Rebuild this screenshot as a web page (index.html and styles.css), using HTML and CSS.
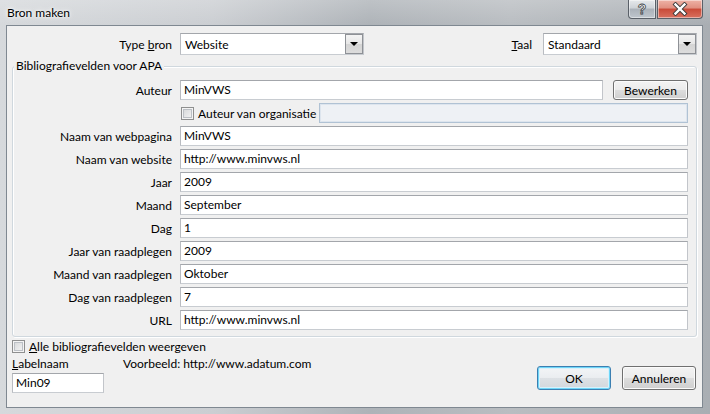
FILE: index.html
```html
<!DOCTYPE html>
<html lang="nl">
<head>
<meta charset="utf-8">
<title>Bron maken</title>
<link rel="stylesheet" href="styles.css">
</head>
<body>
<div class="window">
  <div class="titlebar">
    <span class="title">Bron maken</span>
    <div class="caption">
      <div class="cap-btn help"><span class="help-glyph">?</span></div>
      <div class="cap-btn close">
        <svg width="16" height="14" viewBox="0 0 16 14">
          <path d="M3.5 2.5 L12.5 11.5 M12.5 2.5 L3.5 11.5" stroke="#3a3a3a" stroke-width="4.2" stroke-linecap="square" fill="none"/>
          <path d="M3.5 2.5 L12.5 11.5 M12.5 2.5 L3.5 11.5" stroke="#ffffff" stroke-width="2.4" stroke-linecap="square" fill="none"/>
        </svg>
      </div>
    </div>
  </div>
  <div class="client">
    <div class="top-row">
      <span class="lbl type-lbl">Type <u>b</u>ron</span>
      <div class="select type-select"><span class="value">Website</span><span class="drop"><span class="tri"></span></span></div>
      <span class="lbl taal-lbl"><u>T</u>aal</span>
      <div class="select taal-select"><span class="value">Standaard</span><span class="drop"><span class="tri"></span></span></div>
    </div>
    <div class="group">
      <span class="legend">Bibliografievelden voor APA</span>
      <div class="fields">
        <span class="lbl">Auteur</span>
        <div class="auteur-line"><div class="input grow">MinVWS</div><div class="btn bewerken">Bewerken</div></div>
        <span></span>
        <div class="org-line"><span class="check"></span><span class="org-text">Auteur van organisatie</span><div class="input disabled"></div></div>
        <span class="lbl">Naam van webpagina</span><div class="input">MinVWS</div>
        <span class="lbl">Naam van website</span><div class="input">http://www.minvws.nl</div>
        <span class="lbl">Jaar</span><div class="input">2009</div>
        <span class="lbl">Maand</span><div class="input">September</div>
        <span class="lbl">Dag</span><div class="input">1</div>
        <span class="lbl">Jaar van raadplegen</span><div class="input">2009</div>
        <span class="lbl">Maand van raadplegen</span><div class="input">Oktober</div>
        <span class="lbl">Dag van raadplegen</span><div class="input">7</div>
        <span class="lbl">URL</span><div class="input">http://www.minvws.nl</div>
      </div>
    </div>
    <div class="opt-all"><span class="check"></span><span><u>A</u>lle bibliografievelden weergeven</span></div>
    <div class="footer-main">
      <div class="label-col">
        <span class="lbl-top"><u>L</u>abelnaam</span>
        <div class="input label-input">Min09</div>
      </div>
      <span class="voorbeeld">Voorbeeld: http://www.adatum.com</span>
      <div class="buttons">
        <div class="btn default">OK</div>
        <div class="btn">Annuleren</div>
      </div>
    </div>
  </div>
</div>
</body>
</html>
```
FILE: styles.css
```css
* { box-sizing: border-box; }
html, body { margin: 0; padding: 0; }
body {
  width: 710px;
  height: 414px;
  overflow: hidden;
  font-family: Lato, "Liberation Sans", sans-serif;
  font-size: 12px;
  color: #000;
  background: #c3c7cb;
}
.window {
  width: 710px;
  height: 414px;
  display: flex;
  flex-direction: column;
  background:
    linear-gradient(180deg, rgba(255,255,255,0.2) 0px, rgba(255,255,255,0) 25px),
    linear-gradient(90deg, #d6d9dc 0%, #cbced2 30%, #aeb3b8 52%, #b9bdc1 72%, #a9aeb3 100%);
}
.titlebar {
  height: 25px;
  flex: none;
  display: flex;
  align-items: flex-start;
}
.title {
  padding: 5px 0 0 7px;
  line-height: 15px;
  text-shadow: 0 0 6px #fff, 0 0 3px #fff;
}
.caption {
  margin-left: auto;
  margin-right: 7px;
  display: flex;
  gap: 1px;
}
.cap-btn {
  height: 19px;
  border: 1px solid #5a6068;
  border-top: none;
  display: flex;
  align-items: center;
  justify-content: center;
  box-shadow: inset 0 0 0 1px rgba(255,255,255,0.45);
}
.help {
  width: 28px;
  border-radius: 0 0 0 4px;
  background: linear-gradient(#e6e9ec 0%, #cdd2d7 45%, #aab1b9 50%, #bfc6cd 100%);
}
.help-glyph {
  font-family: "Liberation Sans", sans-serif;
  font-weight: bold;
  font-size: 14px;
  color: #fff;
  -webkit-text-stroke: 0.8px #3a3f45;
  line-height: 14px;
}
.close {
  width: 46px;
  border-radius: 0 0 4px 0;
  background: linear-gradient(#eeb2a6 0%, #e08f80 45%, #c94a38 50%, #d8705f 100%);
}
.client {
  flex: 1;
  margin: 0 7px 6px 6px;
  border: 1px solid #7f8891;
  background: #f0f0f0;
  padding: 7px 5px 0 5px;
  display: flex;
  flex-direction: column;
}
.top-row {
  display: flex;
  align-items: center;
  height: 22px;
}
.type-lbl {
  width: 160px;
  text-align: right;
  margin-right: 8px;
}
.taal-lbl {
  flex: 1;
  text-align: right;
  margin-right: 11px;
}
.type-select { width: 184px; }
.taal-select { width: 154px; }
.select {
  height: 22px;
  display: flex;
  align-items: center;
  background: #fff;
  border: 1px solid;
  border-color: #a3a6ab #c2c5ca #c8ccd1 #b9bcc1;
}
.select .value {
  flex: 1;
  padding-left: 4px;
}
.drop {
  align-self: stretch;
  width: 18px;
  border: 1px solid #8e9196;
  background: linear-gradient(#f4f4f4 0%, #e6e6e6 50%, #d4d4d4 51%, #dcdcdc 100%);
  display: flex;
  align-items: center;
  justify-content: center;
}
.tri {
  width: 0;
  height: 0;
  border-left: 4px solid transparent;
  border-right: 4px solid transparent;
  border-top: 4px solid #000;
}
.group {
  position: relative;
  margin-top: 11px;
  border: 1px solid #d0d8de;
  border-radius: 3px;
  box-shadow: inset 1px 1px 0 #fff, 1px 1px 0 #fff;
  padding: 13px 8px 6px 0;
}
.legend {
  position: absolute;
  left: 1px;
  top: -9px;
  padding: 0 2px;
  line-height: 15px;
  background: #f0f0f0;
}
.fields {
  display: grid;
  grid-template-columns: 159px 1fr;
  column-gap: 8px;
  grid-auto-rows: 20px;
  row-gap: 3px;
  align-items: center;
}
.fields .lbl { text-align: right; }
.input {
  height: 20px;
  border: 1px solid;
  border-color: #a3a6ab #c2c5ca #c8ccd1 #b9bcc1;
  background: #fff;
  padding-left: 3px;
  line-height: 18px;
  white-space: nowrap;
}
.auteur-line {
  display: flex;
  gap: 10px;
  height: 20px;
}
.grow { flex: 1; }
.org-line {
  display: flex;
  align-items: center;
  height: 20px;
}
.org-line .check { margin-left: 1px; }
.org-text { margin-left: 4px; }
.input.disabled {
  margin-left: auto;
  width: 369px;
  border: 1px solid #b0c2d4;
  background: #eef1f5;
  box-shadow: inset 0 0 0 1px #dde5ee;
}
.check {
  width: 13px;
  height: 13px;
  flex: none;
  border: 1px solid #8e8f8f;
  background: linear-gradient(135deg, #d2d4d6, #f7f7f7);
  box-shadow: inset 0 0 0 1px #f4f4f4, inset 0 0 0 2px #bcc0c5;
}
.btn {
  height: 24px;
  width: 74px;
  border: 1px solid #707070;
  border-radius: 3px;
  background: linear-gradient(#f3f3f3 0%, #ebebeb 50%, #dddddd 51%, #cfcfcf 100%);
  box-shadow: inset 0 0 0 1px #fbfbfb;
  display: flex;
  align-items: center;
  justify-content: center;
}
.btn.bewerken {
  width: 75px;
  height: 20px;
}
.btn.default {
  border-color: #3c7fb1;
  box-shadow: inset 0 0 0 1px #6fd6f8, inset 0 0 0 2px #d8f1fb;
  background: linear-gradient(#f3f5f7 0%, #eaedf0 50%, #dde1e5 51%, #d2d7dc 100%);
}
.opt-all {
  margin-top: 2px;
  height: 15px;
  display: flex;
  align-items: center;
  gap: 4px;
}
.footer-main {
  display: flex;
  margin-top: 2px;
}
.label-col {
  width: 92px;
  display: flex;
  flex-direction: column;
}
.lbl-top { line-height: 15px; }
.label-input {
  margin-top: 2px;
  height: 20px;
}
.voorbeeld {
  margin-left: 19px;
  line-height: 15px;
}
.buttons {
  margin-left: auto;
  margin-right: 1px;
  margin-bottom: 3px;
  align-self: flex-end;
  display: flex;
  gap: 11px;
}
```
